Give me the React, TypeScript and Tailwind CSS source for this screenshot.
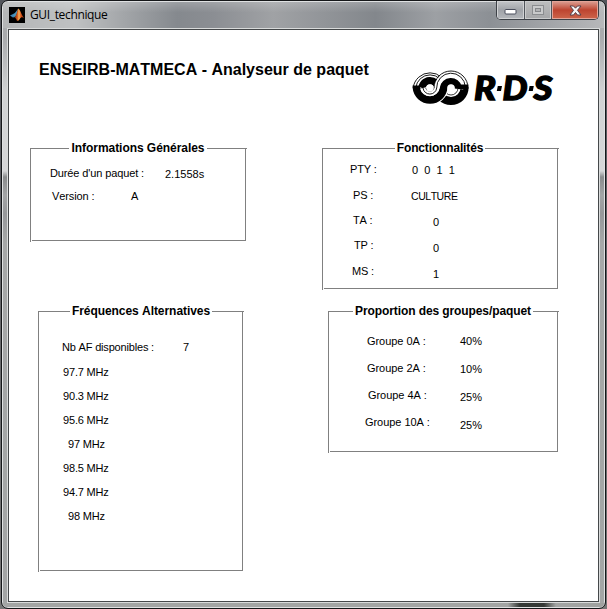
import type { ReactNode } from "react";

function MatlabIcon() {
  return (
    <svg className="h-4 w-4 shrink-0" viewBox="0 0 16 16">
      <defs>
        <linearGradient id="flame" x1="0" x2="1" y1="0" y2="0">
          <stop offset="0" stopColor="#5a1a10" />
          <stop offset="0.35" stopColor="#d9601c" />
          <stop offset="0.5" stopColor="#f8b45a" />
          <stop offset="0.7" stopColor="#d4511a" />
          <stop offset="1" stopColor="#a5380f" />
        </linearGradient>
      </defs>
      <rect width="16" height="16" fill="#000" />
      <path d="M1 8.6 4.6 6.8 6.2 8.5 4.2 10.8Z" fill="#3f86b4" />
      <path d="M4.6 6.8C6.5 6.2 7.4 3.6 9.2 1.8L7.4 8.6 6 10.2 4.2 9Z" fill="#4b94b8" />
      <path d="M9.4 1.4C11 2.2 12.6 8 15 11 13.2 9.8 12 10 10.6 12.2 9.8 13.4 8.6 14.2 7.8 13.6 7.4 12 6.6 10.6 5 10.6 7.6 9 8 4 9.4 1.4Z" fill="url(#flame)" />
    </svg>
  );
}

function RdsLogo() {
  return (
    <svg className="block h-[40px] w-[146px]" viewBox="411 67 146 40" fill="none" stroke="#000">
      {/* right ring, lower half */}
      <path d="M464.6 87.5A13.6 13.6 0 0 1 437.4 87.5" strokeWidth="8" />
      <g strokeWidth="0.8">
        <path d="M458 88A7 7 0 0 1 444 88" />
      </g>
      {/* left ring, upper half */}
      <g strokeWidth="0.9">
        <path d="M413.2 88A17 17 0 0 1 447 88" />
        <path d="M415.8 88A14.3 14.3 0 0 1 444.3 88" />
      </g>
      <path d="M422.2 89A7.8 7.8 0 0 1 437.8 88" strokeWidth="7.6" />
      {/* solid ribbon running through both rings */}
      <path d="M416.3 87.5A13.7 13.7 0 0 0 443.6 87.5A7.4 7.4 0 0 1 458.4 89" stroke="#fff" strokeWidth="9.6" />
      <path d="M416.5 85.5V87.5A13.6 13.6 0 0 0 443.6 87.5A7.4 7.4 0 0 1 458.4 89" strokeWidth="7.8" />
      {/* striped ribbon */}
      <path d="M464.8 86A14.3 14.3 0 0 0 436.7 87.5A7 7 0 0 1 423 88" stroke="#fff" strokeWidth="6" />
      <g strokeWidth="0.9">
        <path d="M468 88A17 17 0 0 0 434 88A4.2 4.2 0 0 1 425.8 88" />
        <path d="M465.3 87A14.3 14.3 0 0 0 436.7 88A6.9 6.9 0 0 1 423 88" />
      </g>
      <path d="M464.6 84.5V89" strokeWidth="7.4" />
      <circle cx="430" cy="88" r="3.7" fill="#fff" stroke="none" />
      <circle cx="451" cy="88" r="3.7" fill="#fff" stroke="none" />
      <g fill="#000" stroke="#000" strokeWidth="1.3" className="font-['Lato'] text-[33px] font-black italic">
        <text x="474" y="99.5" textLength="22" lengthAdjust="spacingAndGlyphs">R</text>
        <text x="502.5" y="99.5" textLength="25" lengthAdjust="spacingAndGlyphs">D</text>
        <text x="533.5" y="99.5" textLength="19" lengthAdjust="spacingAndGlyphs">S</text>
      </g>
      <path d="M497.8 86H502L501 91H496.8ZM529.6 86H533.8L532.8 91H528.6Z" fill="#000" stroke="none" />
    </svg>
  );
}

/* Etched frame: the top and left rules overrun their corners by one pixel. */
function Panel({ title, frame, legend, children }: { title: string; frame: string; legend: string; children: ReactNode }) {
  return (
    <section
      className={`relative flex flex-col border border-[#808080] before:absolute before:-top-px before:-right-[2px] before:h-px before:w-px before:bg-[#808080] after:absolute after:-bottom-[2px] after:-left-px after:h-[2px] after:w-[2px] after:border-l after:border-[#808080] after:bg-white ${frame}`}
    >
      <h2 className={`-mt-[9px] h-4 shrink-0 bg-white text-center text-[12px] leading-4 font-bold ${legend}`}>{title}</h2>
      <div className="flex">{children}</div>
    </section>
  );
}

type Item = { text: string; at: string };

function Column({ className, items }: { className: string; items: Item[] }) {
  return (
    <div className={`flex shrink-0 flex-col ${className}`}>
      {items.map((item, i) => (
        <span key={i} className={`block leading-[14px] whitespace-pre ${item.at}`}>{item.text}</span>
      ))}
    </div>
  );
}

function WindowButtons() {
  return (
    <div className="mt-px mr-[8px] flex h-[19px] w-[103px] shrink-0 overflow-hidden rounded-b-[5px] border border-t-0 border-[#3d4147]">
      <div className="flex w-[28px] items-center justify-center border-r border-[#50545a] bg-linear-to-b from-[#c4c6c9] via-[#a0a3a8] via-50% to-[#b4b7bb] pt-[3px] shadow-[inset_0_0_0_1px_#d2d3d5]">
        <svg width="13" height="7" viewBox="0 0 13 7"><rect x="1" y="1.5" width="11" height="4.5" rx="1" fill="#fff" stroke="#4b4e5c" /></svg>
      </div>
      <div className="flex w-[27px] items-center justify-center border-r border-[#50545a] bg-linear-to-b from-[#bdbebf] to-[#a5a6a8] shadow-[inset_0_0_0_1px_#cbcccd]">
        <svg width="12" height="10" viewBox="0 0 12 10"><rect x="0.5" y="0.5" width="11" height="9" fill="#c9cacb" stroke="#8b8d90" /><rect x="3.5" y="3.5" width="5" height="3" fill="#b2b3b5" stroke="#85878a" /></svg>
      </div>
      <div className="flex flex-1 items-center justify-center bg-linear-to-b from-[#dba196] via-[#bd4430] via-50% to-[#cd654b] shadow-[inset_0_0_0_1px_#e3a497]">
        <svg width="13" height="11" viewBox="0 0 13 11">
          <path d="M1 1H4.5L6.5 3.2 8.5 1H12L8.5 5.3 12 10H8.5L6.5 7.5 4.5 10H1L4.5 5.3Z" fill="#f7f7f7" stroke="#54404b" strokeWidth="1" />
        </svg>
      </div>
    </div>
  );
}

export default function App() {
  return (
    <div className="h-[609px] w-[607px] overflow-hidden bg-linear-to-b from-[#53565c] to-[#777] pl-px font-['Liberation_Sans',Arial,sans-serif] text-[11px] text-black [font-kerning:none]">
      <div className="flex h-[609px] w-[605px] flex-col rounded-[7px] border border-[#151719] bg-[linear-gradient(180deg,#a9abad_0%,#a9abad_6%,#d0d2d3_15%,#d6d7d8_28%,#8a8c8d_29%,#a3a5a6_32%,#96989a_35%,#a6a8a8_40%,#a3a5a5_100%)] shadow-[inset_0_0_0_1px_#dfe1e2]">
        <header className="m-px mb-0 flex h-[26px] shrink-0 items-start rounded-t-[5px] bg-[linear-gradient(180deg,#ffffff30,#ffffff00_40%),linear-gradient(90deg,#b4b6b7_0%,#bfc1c2_12%,#a3a6a9_20%,#85898e_29%,#8b8e93_35%,#a0a2a5_45%,#83878c_62%,#9da0a4_72%,#8c9095_81%,#b7b8ba_100%)] pl-[6px]">
          <div className="mt-[5px]"><MatlabIcon /></div>
          <span className="mt-[4px] ml-[5px] flex-1 font-['Open_Sans','Noto_Sans',sans-serif] text-[12px] leading-[17px] tracking-[-0.35px]">GUI_technique</span>
          <div className="-mt-[2px] -mr-[3px] flex"><WindowButtons /></div>
        </header>
        <main className="mx-[5px] flex h-[575px] w-[593px] shrink-0 flex-col border border-[#d9dbdb]">
          <div className="flex flex-1 flex-col border border-[#45484a] bg-white">
            <div className="flex h-[118px] shrink-0">
              <h1 className="mt-[30px] ml-[30px] w-[372px] shrink-0 text-[16px] leading-5 font-bold whitespace-nowrap">ENSEIRB-MATMECA - Analyseur de paquet</h1>
              <div className="mt-[37px]"><RdsLogo /></div>
            </div>
            <div className="flex">
              <div className="flex w-[313px] shrink-0 flex-col">
                <Panel title="Informations Générales" frame="ml-[21px] w-[216px] h-[93px]" legend="ml-[38px] w-[138px] tracking-[-0.05px]">
                  <Column className="w-[134px] pt-[10px] tracking-[-0.12px]" items={[
                    { text: "Durée d'un paquet :", at: "ml-[19px]" },
                    { text: "Version :", at: "mt-[9px] ml-[21px]" },
                  ]} />
                  <Column className="-ml-[34px] pt-[11px]" items={[
                    { text: "2.1558s", at: "ml-[34px]" },
                    { text: "A", at: "mt-[8px]" },
                  ]} />
                </Panel>
                <Panel title="Fréquences Alternatives" frame="mt-[70px] ml-[29px] w-[205px] h-[260px]" legend="ml-[31px] w-[142px] tracking-[-0.05px]">
                  <Column className="w-[144px] pt-[21px] tracking-[-0.18px]" items={[
                    { text: "Nb AF disponibles :", at: "ml-[23px]" },
                    { text: "97.7 MHz", at: "mt-[11px] ml-[24px]" },
                    { text: "90.3 MHz", at: "mt-[10px] ml-[24px]" },
                    { text: "95.6 MHz", at: "mt-[10px] ml-[24px]" },
                    { text: "97 MHz", at: "mt-[10px] ml-[29px]" },
                    { text: "98.5 MHz", at: "mt-[10px] ml-[24px]" },
                    { text: "94.7 MHz", at: "mt-[10px] ml-[24px]" },
                    { text: "98 MHz", at: "mt-[10px] ml-[29px]" },
                  ]} />
                  <Column className="pt-[21px]" items={[{ text: "7", at: "" }]} />
                </Panel>
              </div>
              <div className="flex flex-col">
                <Panel title="Fonctionnalités" frame="w-[236px] h-[141px]" legend="ml-[72px] w-[90px] tracking-[-0.15px]">
                  <Column className="w-[88px] pt-[6px] tracking-[-0.2px]" items={[
                    { text: "PTY :", at: "ml-[27px]" },
                    { text: "PS :", at: "mt-[12px] ml-[30px]" },
                    { text: "TA :", at: "mt-[11px] ml-[30px]" },
                    { text: "TP :", at: "mt-[11px] ml-[31px]" },
                    { text: "MS :", at: "mt-[12px] ml-[29px]" },
                  ]} />
                  <Column className="pt-[7px]" items={[
                    { text: "0  0  1  1", at: "ml-px" },
                    { text: "CULTURE", at: "mt-[12px] text-[10.5px] tracking-[-0.45px]" },
                    { text: "0", at: "mt-[12px] ml-[22px]" },
                    { text: "0", at: "mt-[12px] ml-[22px]" },
                    { text: "1", at: "mt-[12px] ml-[22px]" },
                  ]} />
                </Panel>
                <Panel title="Proportion des groupes/paquet" frame="mt-[22px] ml-[6px] w-[230px] h-[141px]" legend="ml-[24px] w-[180px] tracking-[-0.1px]">
                  <Column className="w-[131px] pt-[15px] tracking-[-0.05px]" items={[
                    { text: "Groupe 0A :", at: "ml-[38px]" },
                    { text: "Groupe 2A :", at: "mt-[13px] ml-[38px]" },
                    { text: "Groupe 4A :", at: "mt-[13px] ml-[39px]" },
                    { text: "Groupe 10A :", at: "mt-[13px] ml-[36px]" },
                  ]} />
                  <Column className="pt-[15px]" items={[
                    { text: "40%", at: "" },
                    { text: "10%", at: "mt-[14px]" },
                    { text: "25%", at: "mt-[14px]" },
                    { text: "25%", at: "mt-[14px]" },
                  ]} />
                </Panel>
              </div>
            </div>
          </div>
        </main>
        <footer className="mx-px mt-auto mb-px h-[4px] rounded-b-[5px] bg-[linear-gradient(90deg,#a3a5a4_0%,#a3a5a4_84%,#343835_86%,#343835_90%,#a3a5a4_92%,#9fa19f_100%)]" />
      </div>
    </div>
  );
}
